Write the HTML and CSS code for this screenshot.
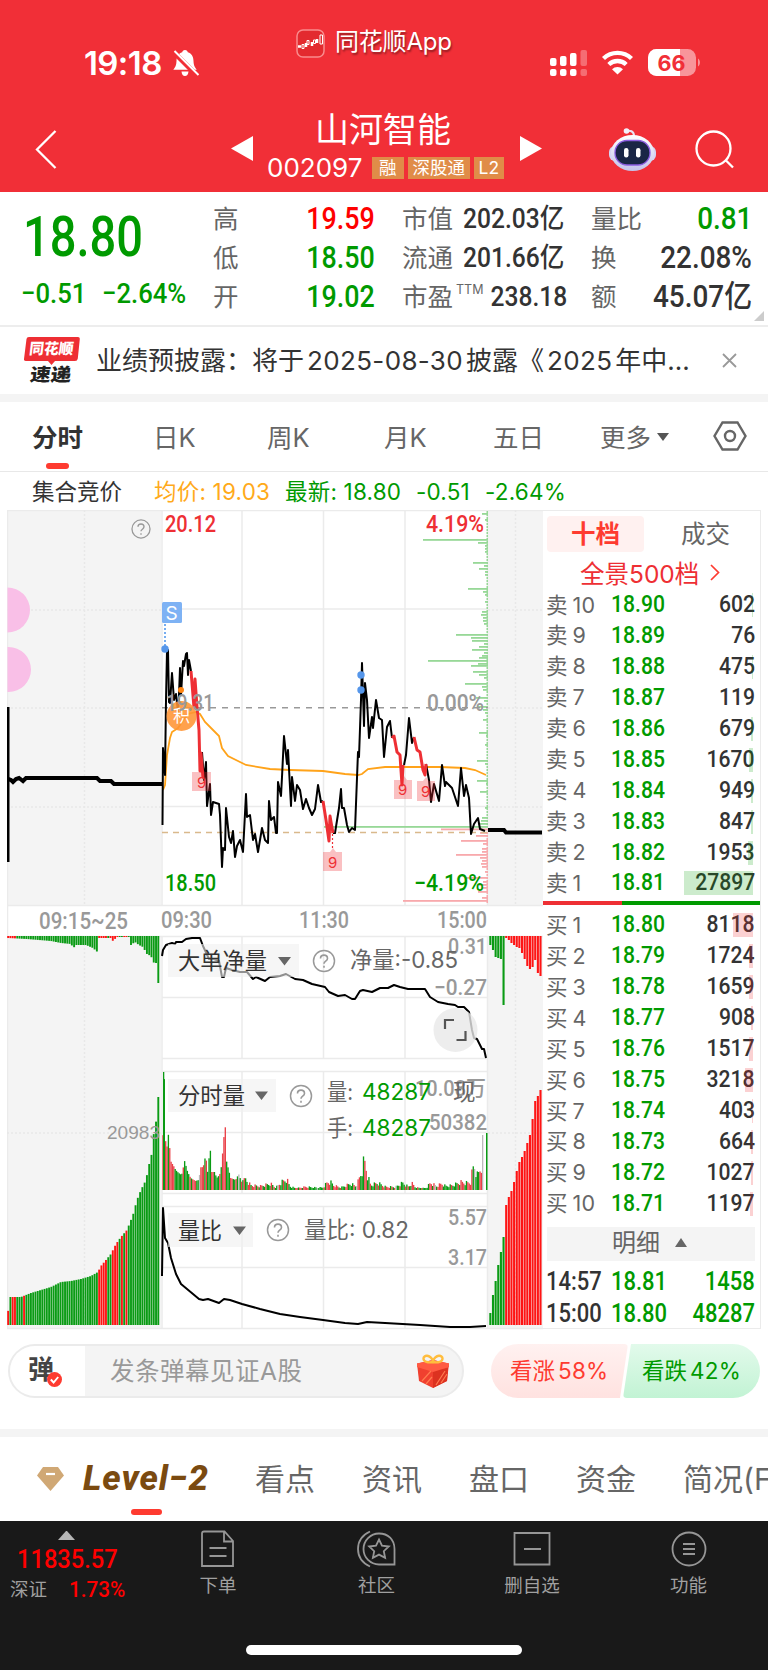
FILE: index.html
```html
<!DOCTYPE html>
<html lang="zh-CN">
<head>
    <meta charset="UTF-8">
    <meta name="viewport" content="width=device-width, initial-scale=1.0">
    <title>山河智能 002097</title>
    <link rel="stylesheet" href="styles.css">
</head>
<body>
    <header class="header">
        <div class="status-bar">
            <div class="status-time">
                <span class="clock">19:18</span>
                <svg width="28" height="28" viewBox="0 0 28 28">
                    <path d="M13 1c1.700 0 2.600 1 2.800 2.300 4 1.200 5.600 4.500 5.700 8.700.1 4.500 1.500 6.500 3.300 8.700H1.300c1.800-2.200 3.100-4.200 3.200-8.700.1-4.200 1.800-7.500 5.700-8.700C10.400 2 11.300 1 13 1zM9.500 22.500h7c-.3 3-1.600 4.500-3.500 4.500s-3.200-1.500-3.500-4.500z" fill="#fff"/>
                    <path d="M1 2.500 25.500 27" stroke="#f12f37" stroke-width="5"/>
                    <path d="M2.500 2 26.500 26" stroke="#fff" stroke-width="2"/>
                </svg>
            </div>
            <div class="app-name">
                <svg width="29" height="29" viewBox="0 0 29 29">
                    <rect x="1" y="1" width="27" height="27" rx="6" fill="#e32a2f" stroke="#f98c8d" stroke-width="1.500"/>
                    <path d="M2 17.500h3M10 14v4M16 13v4M21 10v4" stroke="#fff" stroke-width="2.500"/>
                    <path d="M6 15.500h2v4H6zM11 11.500h2v4h-2zM17.500 11h2v3.500h-2zM24 6h2.500v9H24z" fill="none" stroke="#fff" stroke-width="1"/>
                </svg>
                <span>同花顺App</span>
            </div>
            <div class="status-icons">
                <svg width="37" height="26" viewBox="0 0 37 26" fill="#fff">
                    <rect x="0" y="8" width="6.500" height="8" rx="2"/>
                    <rect x="10" y="6" width="6.500" height="10" rx="2"/>
                    <rect x="20" y="3" width="6.500" height="13" rx="2"/>
                    <rect x="30.500" y="0" width="6.500" height="16" rx="2" opacity=".3"/>
                    <rect x="0" y="19" width="6.500" height="7" rx="2"/>
                    <rect x="10" y="19" width="6.500" height="7" rx="2"/>
                    <rect x="20" y="19" width="6.500" height="7" rx="2"/>
                    <rect x="30.500" y="19" width="6.500" height="7" rx="2" opacity=".3"/>
                </svg>
                <svg class="wifi" width="33" height="25" viewBox="0 0 33 25">
                    <path d="M2.500 8.500a20 20 0 0 1 28 0M7.800 14.500a12.500 12.500 0 0 1 17.400 0" fill="none" stroke="#fff" stroke-width="4.300"/>
                    <path d="M16.500 24.500 11 19.200a8 8 0 0 1 11 0z" fill="#fff"/>
                </svg>
                <svg width="53" height="27" viewBox="0 0 53 27">
                    <rect width="48" height="27" rx="8.500" fill="#f8959a"/>
                    <path d="M8.500 0H32v27H8.500A8.500 8.500 0 0 1 0 18.500v-10A8.500 8.500 0 0 1 8.500 0z" fill="#fff"/>
                    <path d="M50 9.500c2.600 1.500 2.600 6.500 0 8z" fill="#f8959a"/>
                    <text x="9.500" y="21.500" class="battery-text" textLength="28" lengthAdjust="spacingAndGlyphs">66</text>
                </svg>
            </div>
        </div>
        <nav class="title-bar">
            <svg class="back" width="22" height="39" viewBox="0 0 22 39"><path d="M20.500 1 2 19.500l18.500 18.500" fill="none" stroke="#fff" stroke-width="2.300"/></svg>
            <svg class="prev" width="22" height="25" viewBox="0 0 22 25"><path d="M22 0v25L0 12.500z" fill="#fff"/></svg>
            <div class="stock">
                <h1>山河智能</h1>
                <div class="stock-code">
                    <span class="code">002097</span>
                    <span class="badge">融</span>
                    <span class="badge">深股通</span>
                    <span class="badge">L2</span>
                </div>
            </div>
            <svg class="next" width="22" height="25" viewBox="0 0 22 25"><path d="M0 0v25l22-12.500z" fill="#fff"/></svg>
            <svg class="robot" width="47" height="43" viewBox="0 0 47 43">
                <defs>
                    <linearGradient id="robotHead" x1="0" y1="0" x2="0" y2="1">
                        <stop offset="0" stop-color="#fff"/>
                        <stop offset="1" stop-color="#c3c2ea"/>
                    </linearGradient>
                </defs>
                <path d="M17 3c4-1 8 0 8 5" fill="none" stroke="#e9e4f3" stroke-width="2"/>
                <circle cx="17.500" cy="3" r="2.800" fill="#f3eff9"/>
                <rect x="0" y="18" width="47" height="15" rx="6" fill="#d6d5f3"/>
                <ellipse cx="23.500" cy="25" rx="21.500" ry="18" fill="url(#robotHead)"/>
                <rect x="6" y="12.500" width="35" height="24.500" rx="12" fill="#1a2646" stroke="#8b5de0" stroke-width="1.300"/>
                <rect x="15" y="20" width="4.500" height="9.500" rx="2.200" fill="#fff"/>
                <rect x="27" y="20" width="4.500" height="9.500" rx="2.200" fill="#fff"/>
            </svg>
            <svg class="search" width="39" height="39" viewBox="0 0 39 39" fill="none" stroke="#fff" stroke-width="2.300">
                <circle cx="18.500" cy="18.500" r="17"/>
                <path d="m30.500 30 7.500 7.500"/>
            </svg>
        </nav>
    </header>

    <section class="quote">
        <div class="quote-price">
            <div class="price-now"><span class="num">18.80</span></div>
            <div class="price-diff">
                <span class="num">−0.51</span>
                <span class="num">−2.64%</span>
            </div>
        </div>
        <dl class="quote-col">
            <div><dt>高</dt><dd class="num up">19.59</dd></div>
            <div><dt>低</dt><dd class="num down">18.50</dd></div>
            <div><dt>开</dt><dd class="num down">19.02</dd></div>
        </dl>
        <dl class="quote-col small">
            <div><dt>市值</dt><dd class="num">202.03亿</dd></div>
            <div><dt>流通</dt><dd class="num">201.66亿</dd></div>
            <div><dt>市盈<sup>TTM</sup></dt><dd class="num">238.18</dd></div>
        </dl>
        <dl class="quote-col wide">
            <div><dt>量比</dt><dd class="num down">0.81</dd></div>
            <div><dt>换</dt><dd class="num">22.08%</dd></div>
            <div><dt>额</dt><dd class="num">45.07亿</dd></div>
        </dl>
        <i class="corner"></i>
    </section>

    <section class="news">
        <svg width="56" height="47" viewBox="0 0 56 47">
            <path d="M5 0h49q2 0 1.800 2l-2 19.500q-.3 2.500-2.800 2.500H31l-3.500 4-3.500-4H2Q-.3 24 0 22L2.500 2Q2.700 0 5 0z" fill="#ee2f34"/>
            <text x="7" y="17.500" class="logo-top" textLength="44" transform="skewX(-7)">同花顺</text>
            <text x="11" y="44" class="logo-bottom" textLength="41" transform="skewX(-7)">速递</text>
        </svg>
        <p>业绩预披露：将于<span>2025-08-30</span>披露《<span>2025</span>年中...</p>
        <svg width="15" height="15" viewBox="0 0 15 15"><path d="m1 1 13 13M14 1 1 14" stroke="#999" stroke-width="1.800"/></svg>
    </section>

    <nav class="period-tabs">
        <a class="active">分时</a>
        <a>日K</a>
        <a>周K</a>
        <a>月K</a>
        <a>五日</a>
        <a class="more">更多</a>
        <svg width="34" height="30" viewBox="0 0 34 30" fill="none" stroke="#666" stroke-width="2.400">
            <path d="M9.500 1.500h15L32.500 15l-8 13.500h-15L1.500 15z"/>
            <circle cx="17" cy="15" r="5"/>
        </svg>
    </nav>

    <div class="info-line">
        <span class="auction">集合竞价</span>
        <span class="avg">均价: 19.03</span>
        <span class="last">最新: 18.80</span>
        <span class="last">-0.51</span>
        <span class="last">-2.64%</span>
    </div>

    <main class="board">
        <svg class="chart" id="chart" width="536" height="820" viewBox="7 510 536 820">
            <!-- 背景与网格 -->
            <path class="side" d="M7 510h154v395H7zM7 936h154v392H7zM488 510h55v395h-55zM488 936h55v392h-55z"/>
            <path class="grid" d="M7 510.500h536M7 905.500h536M7.500 510v818M162 510v395M162 936v392M242 510v395M323.500 510v395M405 510v395M162 609h326M162 806.500h326M487.500 510v395
                M7 936.500h536M162 997.500h326M162 1058.500h326M162 1071.500h326M162 1132.500h326M162 1193.500h326M162 1206.500h326M162 1267.500h326M7 1328.500h536
                M242 936v122M323.500 936v122M405 936v122M242 1071v122M323.500 1071v122M405 1071v122M242 1206v122M323.500 1206v122M405 1206v122M487.500 936v392"/>
            <path class="dots" d="M84.500 510v395M84.500 936v392M7 610h154M7 708h154M7 807h154M7 1133h154M515.500 510v395M515.500 936v392M488 610h55M488 708h55M488 807h55M488 1133h55"/>
            <path d="M7 587.500a22.500 22.500 0 0 1 0 45zM8 647a22.500 22.500 0 0 1 0 45h-1v-45z" transform="translate(.5)" fill="#f9bfe7"/>

            <g id="depth"></g>
            <path d="M162 707.700h326" stroke="#999" stroke-width="1.500" stroke-dasharray="6 6"/>
            <path d="M162 832.500h326" stroke="#d9b98c" stroke-width="1.500" stroke-dasharray="6 5"/>

            <!-- 集合竞价 -->
            <path d="M8 707v155" stroke="#000" stroke-width="3"/>
            <path d="M8 779l3 1 2 2 3-3 3-1 4 3 3-3h71l3 3h11l3 3h48" class="auction-line"/>
            <path d="M488 830h16l2 2.500h36" class="auction-line"/>

            <!-- 均线与分时线 -->
            <polyline class="avg-line" points="163,790 165,785 167,755 170,738 172,732 178,728 182,722 188,714 196,712 200,714 205,722 213,730 219,736 222,748 228,756 240,762 246,765 270,769 290,770 323,771 345,774 358,775 362,774 368,769 385,767 405,767 440,767 465,768 475,770 486,775"/>
            <polyline class="line" points="162.500,825 163,748 165,775 166,700 167,651 168,650 169,702 170,703 172,673 174,700 176,694 178,712 179,695 180,668 181,695 183,661 184,666 186,654 187,653 188,675 189,660 191,671"/>
            <polyline class="line" points="202,752 204,780 206,762 207,806 210,784 211,815 213,802 219,804 220,815 222,867 223,848 225,850 226,808 229,837 231,843 233,831 235,857 237,846 240,840 243,852 246,794 247,817 250,815 253,840 255,834 258,852 262,828 265,840 268,843 269,801 271,820 274,817 276,833 277,833 278,782 281,796 282,777 284,736 287,764 288,750 291,806 292,777 295,801 297,785 300,790 303,809 306,799 309,808 312,815 315,809 318,785 321,802 323,801"/>
            <polyline class="line" points="333,833 335,833 339,808 341,789 342,808 344,808 347,825 349,832 352,828 355,830 358,752 359,757 361,700 362,663 364,726 365,683 367,700 369,738 372,717 373,728 376,700 379,718 382,720 384,757 387,727 390,721 392,738"/>
            <polyline class="line" points="404,765 406,755 409,718 412,743 414,737"/>
            <polyline class="line" points="426,764 429,780 431,802 434,784 439,801 442,765 445,786 446,782 452,788 456,800 458,806 461,768 464,796 466,785 469,798 471,834 474,824 478,818 480,829 485,831"/>
            <g class="line nine-line">
                <polyline points="191,671 194,708 195,679 197,707 199,730 200,771 201,753 203,778"/>
                <polyline points="323,801 326,820 329,841 330,816 331,822 333,833"/>
                <polyline points="392,738 394,736 397,752 400,755 402,785 403,765"/>
                <polyline points="414,737 417,750 420,752 423,770 425,775 426,764"/>
            </g>
            <path d="M332.500 834v16" stroke="#ee2f34" stroke-width="1.200" stroke-dasharray="2 2"/>
            <g class="nine">
                <path d="M192 772h7l3-4 3 4h6v19h-19zM323 852h7l3-4 3 4h6v19h-19zM394 780h7l3-4 3 4h5v19h-18zM417 781h6l3-4 3 4h6v20h-18z"/>
                <text x="197" y="788">9</text>
                <text x="328" y="868">9</text>
                <text x="398" y="795">9</text>
                <text x="421" y="797">9</text>
            </g>
            <path d="M165 624v24" stroke="#5f9fee" stroke-width="1.700" stroke-dasharray="2 2"/>
            <g fill="#5596ea">
                <circle cx="165" cy="649" r="3.700"/>
                <circle cx="361" cy="675" r="3.700"/>
                <circle cx="361" cy="690" r="3.700"/>
            </g>
            <rect x="162" y="602" width="20" height="21" rx="1.500" fill="#7eb2f4"/>
            <text x="165.500" y="620" font-size="19" fill="#fff">S</text>
            <circle cx="181" cy="690" r="3" fill="#ff8410"/>
            <circle cx="181.500" cy="716" r="15" fill="#ff9433" opacity=".88"/>
            <text x="173" y="722" font-size="17" fill="#fff">积</text>

            <!-- 坐标文字 -->
            <g class="din" font-size="23">
                <text x="165" y="532" textLength="51" fill="#ee2f34">20.12</text>
                <text x="426" y="532" textLength="58" fill="#ee2f34">4.19%</text>
                <text x="165" y="891" textLength="51" fill="#009a00">18.50</text>
                <text x="414" y="891" textLength="70" fill="#009a00">−4.19%</text>
            </g>
            <g class="din axis" font-size="23">
                <text x="166" y="711" textLength="48">19.31</text>
                <text x="427" y="711" textLength="57">0.00%</text>
                <text x="39" y="929" textLength="89">09:15~25</text>
                <text x="161" y="928" textLength="51">09:30</text>
                <text x="299" y="928" textLength="50">11:30</text>
                <text x="437" y="928" textLength="50">15:00</text>
            </g>
            <g transform="translate(141 529)"><use href="#help" transform="scale(.86)"/></g>

            <!-- 大单净量 -->
            <polyline class="line" points="162,956 163,950 166,945 172,943 175,944 176,942 182,942 186,939 192,938 200,938 203,946 209,959 214,959 219,961 222,977 224,977 226,968 232,970 240,972 247,972 253,979 256,977 265,981 270,977 280,976 286,974 295,979 303,980 312,984 325,987 329,992 338,996 345,995 352,999 355,999 360,991 363,990 372,992 380,988 388,988 394,985 400,987 408,989 425,989 430,997 438,1002 448,1004 455,1005 458,1007 464,1007 469,1012 472,1030 474,1038 477,1039 482,1049 484,1049 486,1058"/>
            <!-- 量比曲线 -->
            <polyline class="line" points="162,1276 163,1208 165,1238 168,1243 171,1258 176,1274 181,1284 187,1289 199,1299 203,1300 208,1299 219,1303 224,1299 230,1300 242,1304 260,1309 280,1314 300,1317 323,1320 345,1323 358,1324 367,1322 385,1323 420,1325 450,1327 470,1327 486,1326"/>
            <g id="bars"></g>

            <circle cx="455.500" cy="1030" r="22" fill="#e8e8e8" opacity=".8"/>
            <path d="M445 1029v-9h9M465.500 1031v9h-9" fill="none" stroke="#555" stroke-width="2.200"/>
            <path d="M168 944h131v33H168zM168 1079h108v33H168zM168 1213h85v34h-85z" fill="#f0f0f0" opacity=".6"/>
            <path d="M278 957h13l-6.500 8.500zM255 1091.500h13l-6.500 8.500zM233 1226.500h13l-6.500 8.500z" fill="#666"/>
            <g font-size="22.500" fill="#333">
                <text x="178" y="969" textLength="89">大单净量</text>
                <text x="178" y="1104" textLength="67">分时量</text>
                <text x="178" y="1239" textLength="44">量比</text>
            </g>
            <defs>
                <g id="help">
                    <circle r="10.500" fill="none" stroke="#999" stroke-width="1.500"/>
                    <path d="M-3.500-2.500c0-4.500 7-4.500 7 0 0 2.700-3.500 2.700-3.500 5.200M0 4.800v2" fill="none" stroke="#999" stroke-width="1.600"/>
                </g>
            </defs>
            <use href="#help" x="324" y="961"/>
            <use href="#help" x="301" y="1096"/>
            <use href="#help" x="278" y="1230"/>
            <g class="din axis" font-size="22">
                <text x="448" y="954" textLength="39">0.31</text>
                <text x="434" y="995" textLength="53">−0.27</text>
                <text x="415" y="1096" textLength="71">10.08万</text>
                <text x="429" y="1130" textLength="58">50382</text>
                <text x="448" y="1225" textLength="39">5.57</text>
                <text x="448" y="1265" textLength="39">3.17</text>
            </g>
            <g class="readout" font-size="22.500">
                <text x="350" y="968" textLength="108">净量:-0.85</text>
                <text x="327" y="1100" textLength="26">量:</text>
                <text x="327" y="1136" textLength="26">手:</text>
                <text x="362" y="1100" textLength="69" fill="#009a00">48287</text>
                <text x="362" y="1136" textLength="69" fill="#009a00">48287</text>
                <text x="453" y="1100">现</text>
                <text x="304" y="1238" textLength="105">量比: 0.82</text>
            </g>
            <text x="107" y="1139" class="auction-vol" textLength="53">20983</text>
        </svg>

        <aside class="orders">
            <div class="order-tabs">
                <span class="active">十档</span>
                <span>成交</span>
            </div>
            <div class="panorama">全景500档
                <svg width="10" height="17" viewBox="0 0 10 17"><path d="m1 1 7.500 7.500L1 16" fill="none" stroke="#fe3b30" stroke-width="1.700"/></svg>
            </div>
            <div class="levels sell">
                <div class="level"><span>卖10</span><b class="num">18.90</b><em class="num">602</em><i style="width:1px"></i></div>
                <div class="level"><span>卖9</span><b class="num">18.89</b><em class="num">76</em></div>
                <div class="level"><span>卖8</span><b class="num">18.88</b><em class="num">475</em><i style="width:1px"></i></div>
                <div class="level"><span>卖7</span><b class="num">18.87</b><em class="num">119</em></div>
                <div class="level"><span>卖6</span><b class="num">18.86</b><em class="num">679</em><i style="width:2px"></i></div>
                <div class="level"><span>卖5</span><b class="num">18.85</b><em class="num">1670</em><i style="width:4px"></i></div>
                <div class="level"><span>卖4</span><b class="num">18.84</b><em class="num">949</em><i style="width:2px"></i></div>
                <div class="level"><span>卖3</span><b class="num">18.83</b><em class="num">847</em><i style="width:2px"></i></div>
                <div class="level"><span>卖2</span><b class="num">18.82</b><em class="num">1953</em><i style="width:5px"></i></div>
                <div class="level"><span>卖1</span><b class="num">18.81</b><em class="num">27897</em><i style="width:69px"></i></div>
            </div>
            <div class="ratio"></div>
            <div class="levels buy">
                <div class="level"><span>买1</span><b class="num">18.80</b><em class="num">8118</em><i style="width:20px"></i></div>
                <div class="level"><span>买2</span><b class="num">18.79</b><em class="num">1724</em><i style="width:4px"></i></div>
                <div class="level"><span>买3</span><b class="num">18.78</b><em class="num">1659</em><i style="width:4px"></i></div>
                <div class="level"><span>买4</span><b class="num">18.77</b><em class="num">908</em><i style="width:2px"></i></div>
                <div class="level"><span>买5</span><b class="num">18.76</b><em class="num">1517</em><i style="width:4px"></i></div>
                <div class="level"><span>买6</span><b class="num">18.75</b><em class="num">3218</em><i style="width:8px"></i></div>
                <div class="level"><span>买7</span><b class="num">18.74</b><em class="num">403</em><i style="width:1px"></i></div>
                <div class="level"><span>买8</span><b class="num">18.73</b><em class="num">664</em><i style="width:2px"></i></div>
                <div class="level"><span>买9</span><b class="num">18.72</b><em class="num">1027</em><i style="width:2px"></i></div>
                <div class="level"><span>买10</span><b class="num">18.71</b><em class="num">1197</em><i style="width:3px"></i></div>
            </div>
            <div class="detail-title">明细</div>
            <div class="trade"><span class="num">14:57</span><b class="num">18.81</b><em class="num">1458</em></div>
            <div class="trade"><span class="num">15:00</span><b class="num">18.80</b><em class="num">48287</em></div>
        </aside>
    </main>

    <section class="danmu">
        <div class="danmu-input">
            <div class="danmu-switch">
                <span>弹</span>
                <svg width="15" height="15" viewBox="0 0 15 15"><circle cx="7.500" cy="7.500" r="7.500" fill="#fe3b30"/><path d="m3.800 7.500 2.800 3 4.600-5.500" fill="none" stroke="#fff" stroke-width="1.900"/></svg>
            </div>
            <span class="placeholder">发条弹幕见证A股</span>
            <svg width="32" height="34" viewBox="0 0 32 34">
                <path d="M0 9.500 16 6l16 3.500-2 17.500-14 7-14-7z" fill="#f0402f"/>
                <path d="M16 16v18l14-7 1-13z" fill="#dc3220"/>
                <path d="M0 9.500 16 6l16 3.500V13l-16 5L0 13z" fill="#ff5a42"/>
                <path d="m5 27 9-10M9 30l6-7M19 31l9-14M24 29l6-9" stroke="#ff7b4f" stroke-width="1.200"/>
                <path d="M16 8C11 9 6.500 8 6.500 4.500S13 0 16 7c3-7 9.500-6 9.500-2.500S21 9 16 8z" fill="none" stroke="#ffbd3e" stroke-width="2.400"/>
            </svg>
        </div>
        <div class="vote">
            <span class="vote-up">看涨<b>58%</b></span>
            <span class="vote-down">看跌<b>42%</b></span>
        </div>
    </section>

    <nav class="section-tabs">
        <svg width="27" height="24" viewBox="0 0 27 24">
            <path d="M6 0h15l6 8.500L13.500 24 0 8.500z" fill="#d0a875"/>
            <path d="M9 7h9" stroke="#fff" stroke-width="2.200"/>
        </svg>
        <a class="level2">Level−2</a>
        <a>看点</a>
        <a>资讯</a>
        <a>盘口</a>
        <a>资金</a>
        <a>简况(F10)</a>
    </nav>

    <footer class="tabbar">
        <div class="index">
            <i></i>
            <strong class="num">11835.57</strong>
            <div><span>深证</span><span class="num">1.73%</span></div>
        </div>
        <div class="tab">
            <svg width="36" height="38" viewBox="0 0 36 38"><path d="M4 1.500h20.500L33 11v25H2V3.500q0-2 2-2zM24 2v9.500h9M9.500 18h17M9.500 26h17"/></svg>
            <span>下单</span>
        </div>
        <div class="tab">
            <svg width="40" height="38" viewBox="0 0 40 38"><path d="M13 1.500C-3 9-3 29 13 36.500M22 3.500c9 0 15.500 6 15.500 15.500v15.500H22a15.500 15.500 0 0 1 0-31zM22 9.500l3 6.200 6.800.8-5 4.700 1.300 6.700-6.100-3.300-6.100 3.300 1.300-6.700-5-4.700 6.800-.8z"/></svg>
            <span>社区</span>
        </div>
        <div class="tab">
            <svg width="38" height="38" viewBox="0 0 38 38"><path d="M1.500 3h35v31.500h-35zM11 19h17"/></svg>
            <span>删自选</span>
        </div>
        <div class="tab">
            <svg width="36" height="38" viewBox="0 0 36 38"><circle cx="18" cy="19" r="16.500"/><path d="M12 14h12M12 19h12M12 24h12"/></svg>
            <span>功能</span>
        </div>
        <div class="home-bar"></div>
    </footer>
    <script src="script.js"></script>
</body>
</html>
```
FILE: styles.css
```css
* {
    box-sizing: border-box;
    margin: 0;
    padding: 0;
}
body {
    width: 768px;
    height: 1670px;
    overflow: hidden;
    background: #fff;
    color: #333;
    font-family: Inter, "Noto Sans CJK SC", sans-serif;
}
svg {
    display: block;
    flex: none;
}
/* 窄体数字 */
.num {
    display: inline-block;
    font-family: Roboto, "Noto Sans CJK SC", sans-serif;
    font-weight: 500;
    font-style: normal;
    transform: scaleX(.88);
    transform-origin: left center;
    white-space: nowrap;
}
.up {
    color: #fe0000;
}
.down {
    color: #009a00;
}

/* 顶部 */
.header {
    height: 192px;
    background: #f12f37;
    color: #fff;
}
.status-bar {
    display: grid;
    grid-template-columns: 212px 255px 150px;
    height: 108px;
    padding: 0 0 0 84px;
}
.status-time {
    display: flex;
    align-items: center;
    gap: 8px;
    height: 125px;
}
.clock {
    width: 80px;
    font-size: 33px;
    font-weight: 600;
    letter-spacing: -.6px;
    white-space: nowrap;
}
.app-name {
    display: flex;
    align-items: center;
    gap: 10px;
    height: 87px;
    font-size: 24px;
    line-height: 30px;
    letter-spacing: -.2px;
    text-shadow: 1px 2px 2px rgba(0,0,0,.4);
}
.app-name span {
    margin-top: -3px;
}
.status-icons {
    display: flex;
    align-items: center;
    height: 125px;
    margin-left: -1px;
}
.wifi {
    margin: 0 14px;
}
.battery-text {
    font-size: 22px;
    font-weight: 700;
    fill: #f12f37;
}
.title-bar {
    display: grid;
    grid-template-columns: 196px 22px 257px 79px 106px 39px;
    align-items: center;
    padding-left: 35px;
    height: 84px;
}
.title-bar svg {
    margin-top: -1px;
}
.stock {
    display: flex;
    flex-direction: column;
    margin-top: -8px;
    padding-left: 12px;
}
.title-bar .prev, .title-bar .next {
    margin-top: -3px;
}
.next {
    margin-left: 10px;
}
.robot {
    margin-left: 20px;
}
h1 {
    padding-left: 50px;
    font-size: 34px;
    font-weight: 400;
    line-height: 42px;
}
.next, .robot, .search {
    justify-self: start;
}
.stock-code {
    display: flex;
    align-items: center;
    gap: 4px;
    height: 32px;
    margin-top: 1px;
}
.code {
    width: 103px;
    padding-left: 2px;
    font-size: 26px;
    line-height: 30px;
    letter-spacing: 0;
}
.badge {
    height: 22px;
    padding: 0 5px;
    background: #e08c48;
    font-size: 17.500px;
    line-height: 21px;
    white-space: nowrap;
}
.badge:nth-child(2) {
    padding: 0 7px;
}
.badge:nth-child(4) {
    padding: 0 4.500px;
}

/* 报价 */
.quote {
    position: relative;
    display: grid;
    grid-template-columns: 165px 162px 162px 161px;
    column-gap: 27px;
    height: 135px;
    padding: 7px 0 0 21px;
    border-bottom: 2px solid #ededed;
}
.price-now {
    height: 76px;
    color: #009a00;
    font-size: 56px;
    line-height: 74px;
    padding-left: 2px;
}
.price-now .num {
    transform: scaleX(.84);
}
.price-diff {
    display: grid;
    grid-template-columns: 81px 90px;
    color: #009a00;
    font-size: 28.500px;
    line-height: 38px;
}
.price-diff .num {
    transform: scaleX(.9);
}
.quote-col > div {
    display: flex;
    justify-content: space-between;
    height: 39px;
    line-height: 40px;
}
.quote-col dt {
    color: #666;
    font-size: 25.500px;
    white-space: nowrap;
}
.quote-col dt sup {
    display: inline-block;
    margin-left: 3px;
    font-size: 12.500px;
    line-height: 12px;
    vertical-align: 12px;
}
.quote-col dd {
    font-size: 30.500px;
    transform-origin: right center;
}
.quote-col.wide dd {
    font-size: 31px;
    transform: scaleX(.9);
}
.quote-col.small dd {
    font-size: 27px;
    transform: scaleX(.91);
}
.corner {
    position: absolute;
    right: 4px;
    bottom: 4px;
    border-style: solid;
    border-width: 0 0 10px 10px;
    border-color: transparent transparent #ccc transparent;
}

/* 公告 */
.news {
    display: flex;
    align-items: center;
    height: 75px;
    padding-left: 24px;
    border-bottom: 8px solid #f4f4f4;
}
.news p {
    width: 609px;
    margin: -4px 17px 0 16px;
    overflow: hidden;
    font-size: 26px;
    white-space: nowrap;
}
.news p span {
    margin: 0 3px;
    letter-spacing: .35px;
}
.logo-top {
    fill: #fff;
    font-size: 15px;
    font-weight: 900;
}
.logo-bottom {
    fill: #222;
    font-size: 18px;
    font-weight: 900;
}

/* 周期切换 */
.period-tabs {
    display: grid;
    grid-template-columns: 121px 114px 117px 109px 107px 113px 34px;
    align-items: center;
    height: 70px;
    padding: 0 0 2px 32px;
    border-bottom: 1px solid #e8e8e8;
    color: #666;
    font-size: 25.500px;
}
.period-tabs .active {
    position: relative;
    color: #333;
    font-weight: 700;
}
.period-tabs .active::after {
    content: "";
    position: absolute;
    left: 14px;
    bottom: -15px;
    width: 23px;
    height: 6px;
    border-radius: 3px;
    background: #fe3b30;
}
.more::after {
    content: "";
    display: inline-block;
    margin-left: 6px;
    border: 6px solid transparent;
    border-top: 8px solid #555;
    border-bottom: 0;
    vertical-align: 6px;
}
.info-line {
    display: grid;
    grid-template-columns: 122px 131px 131px 69px 90px;
    height: 38px;
    padding-left: 32px;
    font-size: 22.500px;
    line-height: 39px;
    white-space: nowrap;
}
.avg {
    color: #ffaa1a;
    letter-spacing: .2px;
}
.last {
    color: #009a00;
    letter-spacing: .2px;
}

/* 图表 */
.board {
    display: flex;
    height: 820px;
    padding-left: 7px;
}
.side {
    fill: #f4f4f4;
}
.grid {
    fill: none;
    stroke: #ebebeb;
    stroke-width: 1.500;
}
.dots {
    fill: none;
    stroke: #e8e8e8;
    stroke-width: 1.500;
    stroke-dasharray: 2 2;
}
.line {
    fill: none;
    stroke: #000;
    stroke-width: 2;
    stroke-linejoin: round;
}
.nine-line {
    stroke: #ee2f34;
    stroke-width: 3;
}
.auction-line {
    fill: none;
    stroke: #000;
    stroke-width: 4;
}
.avg-line {
    fill: none;
    stroke: #ffa31a;
    stroke-width: 1.800;
}
.nine path {
    fill: #ee2f34;
    opacity: .3;
}
.nine text {
    fill: #ee2f34;
    font-size: 15px;
}
.din {
    font-family: Roboto, "Noto Sans CJK SC", sans-serif;
    font-weight: 500;
}
.axis {
    fill: #999;
}
.readout {
    fill: #666;
}
.auction-vol {
    fill: #999;
    font-family: "Liberation Sans", Arial, sans-serif;
    font-size: 19px;
}

/* 盘口 */
.orders {
    width: 218px;
    height: 819px;
    border: 1.500px solid #ebebeb;
    border-left: 0;
}
.order-tabs {
    display: grid;
    grid-template-columns: 97px 123px;
    padding: 5px 0 0 4px;
    color: #666;
    font-size: 24.500px;
    line-height: 36px;
    text-align: center;
}
.order-tabs .active {
    border-radius: 4px;
    background: #fff1f0;
    color: #fe3b30;
    font-weight: 700;
}
.panorama {
    display: flex;
    align-items: center;
    gap: 11px;
    height: 40px;
    padding-left: 37px;
    color: #ee2f34;
    font-size: 24.500px;
    white-space: nowrap;
}
.sell {
    margin-top: -3px;
}
.level {
    position: relative;
    display: grid;
    grid-template-columns: 65px 59px 85px;
    align-items: center;
    height: 30.950px;
    padding-left: 3px;
    font-size: 24px;
    line-height: 31px;
}
.level span {
    color: #666;
    font-size: 21.500px;
    letter-spacing: .3px;
    line-height: 28px;
}
.level span::first-letter {
    letter-spacing: 5px;
}
.level b, .trade b {
    color: #009a00;
}
.level em, .trade em {
    justify-self: end;
    transform-origin: right center;
}
.level i {
    position: absolute;
    right: 7px;
    top: 4px;
    height: 24px;
    background: rgba(0,154,0,.2);
}
.buy .level i {
    background: rgba(238,47,52,.22);
}
.ratio {
    height: 4px;
    margin: 3px 0 4px;
    background: linear-gradient(90deg, #ee2f34 79px, #009a00 79px);
}
.detail-title {
    height: 34px;
    margin: 8px 5px 4px 4px;
    padding-left: 65px;
    background: #f4f4f4;
    color: #666;
    font-size: 24px;
    line-height: 32px;
}
.detail-title::after {
    content: "";
    display: inline-block;
    margin-left: 15px;
    border: 6.500px solid transparent;
    border-top: 0;
    border-bottom: 9px solid #666;
    vertical-align: 4px;
}
.trade {
    display: grid;
    grid-template-columns: 65px 59px 85px;
    height: 32.500px;
    padding-left: 3px;
    font-size: 25px;
    line-height: 33px;
}
.trade em {
    color: #009a00;
}

/* 弹幕 */
.danmu {
    display: flex;
    justify-content: space-between;
    height: 107px;
    padding: 14px 8px 0;
    border-bottom: 8px solid #f4f4f4;
}
.danmu-input {
    display: flex;
    align-items: center;
    width: 456px;
    height: 54px;
    overflow: hidden;
    border: 2px solid #ebebeb;
    border-radius: 27px;
    background: #f4f4f4;
}
.danmu-switch {
    position: relative;
    width: 75px;
    height: 52px;
    padding-left: 18px;
    background: #fff;
    color: #444;
    font-size: 26px;
    font-weight: 700;
    line-height: 49px;
}
.danmu-switch svg {
    position: absolute;
    left: 37px;
    top: 27px;
}
.placeholder {
    width: 307px;
    margin: -3px 0 0 25px;
    color: #999;
    font-size: 24.500px;
    letter-spacing: .5px;
}
.vote {
    display: flex;
    width: 269px;
    height: 54px;
    font-size: 22.500px;
    line-height: 54px;
}
.vote b {
    margin-left: 3px;
    font-weight: 400;
    letter-spacing: .2px;
}
.vote-up {
    width: 137px;
    padding-left: 19px;
    border-radius: 27px 4px 4px 27px;
    background: linear-gradient(#fff1f0, #ffe2e0);
    color: #fe3b30;
    clip-path: polygon(0 0, 100% 0, 129px 100%, 0 100%);
}
.vote-down {
    width: 137px;
    margin-left: -5px;
    padding-left: 19px;
    border-radius: 4px 27px 27px 4px;
    background: linear-gradient(#e2faeb, #c2f3d4);
    color: #009a00;
    clip-path: polygon(8px 0, 100% 0, 100% 100%, 0 100%);
}

/* 栏目 */
.section-tabs {
    position: relative;
    display: grid;
    grid-template-columns: 46px 172px 107px 107px 107px 107px 85px;
    align-items: center;
    height: 84px;
    padding: 0 0 4px 37px;
    overflow: hidden;
    color: #666;
    font-size: 30px;
    white-space: nowrap;
}
.section-tabs svg {
    margin-top: 3px;
}
.section-tabs .level2 {
    padding-top: 3px;
    color: #7a4a10;
    font-family: Roboto, sans-serif;
    font-size: 35px;
    font-style: italic;
    font-weight: 800;
    letter-spacing: .9px;
}
.section-tabs::after {
    content: "";
    position: absolute;
    left: 131px;
    bottom: 6px;
    width: 31px;
    height: 6px;
    border-radius: 3px;
    background: #fe3b30;
}

/* 底部 */
.tabbar {
    position: relative;
    display: grid;
    grid-template-columns: 139px 158px 159px 152px 161px;
    height: 149px;
    overflow: hidden;
    background: #191919;
    color: #a0a0a0;
}
.index {
    display: flex;
    flex-direction: column;
    padding: 10px 0 0 10px;
}
.index i {
    width: 17px;
    margin-left: 48px;
    border: 8.500px solid transparent;
    border-top: 0;
    border-bottom: 9px solid #b5b5b5;
}
.index .num {
    color: #fe0000;
}
.index strong {
    margin-left: 7px;
    font-size: 26px;
    line-height: 38px;
    transform: scaleX(.91);
}
.index div {
    display: grid;
    grid-template-columns: 59px 60px;
    margin-top: -2px;
    font-size: 22.500px;
    line-height: 26px;
}
.index div .num {
    transform: scaleX(.92);
}
.index div span:first-child {
    font-size: 18.500px;
}
.tab {
    display: flex;
    flex-direction: column;
    align-items: center;
    padding-top: 9px;
    font-size: 18.500px;
    line-height: 34px;
}
.tab svg {
    fill: none;
    stroke: #969696;
    stroke-width: 1.800;
}
.home-bar {
    position: absolute;
    left: 246px;
    bottom: 15px;
    width: 276px;
    height: 10px;
    border-radius: 5px;
    background: #fff;
}
```
FILE: script.js
```js
const NS = 'http://www.w3.org/2000/svg';
const GREEN = '#0a9b14';
const RED = '#fe1414';

function bar(parent, x, y, w, h, color) {
    const r = document.createElementNS(NS, 'rect');
    r.setAttribute('x', x);
    r.setAttribute('y', y);
    r.setAttribute('width', w);
    r.setAttribute('height', h);
    r.setAttribute('fill', color);
    parent.appendChild(r);
}

// 在关键点之间线性插值
function valueAt(points, x) {
    for (let i = 1; i < points.length; i++) {
        if (x <= points[i][0]) {
            const [x0, y0] = points[i - 1];
            const [x1, y1] = points[i];
            return y0 + (y1 - y0) * (x - x0) / (x1 - x0);
        }
    }
    return points[points.length - 1][1];
}
function inRanges(ranges, x) {
    return ranges.some(r => x >= r[0] && x <= r[1]);
}

const bars = document.getElementById('bars');

// 左侧集合竞价
const auctionNet = [[7,2],[26,3],[50,5],[60,7],[70,8],[72.5,12],[75,9],[85,9],[92,12],[96.5,16],[97.5,2],[110,2],[112,5],[116,1],[128,1],[130,9],[134,6],[138,9],[142,11],[146,18],[150,20],[153,27],[156,27],[157,47]];
const auctionNetRed = [[7,15],[21,23],[97,106],[109,118],[123,126]];
const auctionVol = [[7,12],[8.5,28],[20,28],[30,32],[40,35],[50,38],[60,43],[70,44],[80,46],[90,49],[97,53],[100,59],[110,71],[115,81],[120,88],[126,95],[132,110],[136,125],[140,135],[145,145],[148,160],[151,172],[153,193],[156,208],[157,228]];
const auctionVolRed = [[7,8],[10,15],[21,24],[97,106],[111,118],[120,122],[125,127]];
for (let i = 0; i < 67; i++) {
    const x = 7.2 + i * 2.275;
    bar(bars, x, 936, 1.9, valueAt(auctionNet, x), inRanges(auctionNetRed, x) ? RED : GREEN);
    const h = valueAt(auctionVol, x);
    bar(bars, x, 1325 - h, 1.9, h, inRanges(auctionVolRed, x) ? RED : GREEN);
}

// 右侧收盘竞价
const closeNet = [9,14,21,22,23,69,2,4,7,9,11,12,17,23,30,33,31,24,37,40];
const closeTop = [1313,1295,1281,1265,1252,1237,1205,1197,1191,1182,1171,1162,1157,1151,1143,1135,1119,1101,1096,1090];
closeNet.forEach((h, i) => {
    const x = 489.3 + i * 2.64;
    const color = i < 6 ? GREEN : RED;
    bar(bars, x, 936, 2.1, h, color);
    bar(bars, x, closeTop[i], 2.1, 1325 - closeTop[i], color);
});

// 分时量
const volume = [[162,39],[163.5,118],[165,49],[166,34],[167,60],[168.5,50],[170,29],[173,24],[175,20],[178,17],[181,15],[184,29],[187,18],[190,12],[195,9],[198,10],[201,27],[202,20],[205,35],[207,18],[209.5,43],[211,18],[214,18],[216,12],[219,15],[221,25],[223,50],[224.5,66],[226,28],[228,20],[230,12],[235,10],[238,16],[241,8],[245,14],[250,6],[260,5],[270,8],[275,3],[280,9],[286,14],[289,5],[295,2],[305,4],[315,3],[322,3],[327,10],[330,10],[333,6],[340,3],[350,8],[355,5],[358,12],[361,24],[363.5,37],[365,32],[367,18],[370,6],[377,9],[385,4],[395,4],[402,9],[408,4],[411,9],[415,3],[425,2],[430,9],[436,5],[441,8],[445,5],[452,6],[460,10],[466,9],[470,10],[472,27],[474,31],[477,17],[480,30],[481,34]];
for (let i = 0; i < 236; i++) {
    const x = 162.3 + i * 1.355;
    let color = (i * 7 + (i * i) % 11) % 9 < 4 ? '#ea4048' : GREEN;
    if ((i * 13) % 29 === 3) color = '#bbb';
    if (i === 1) color = GREEN;
    const wobble = i > 60 ? 1 - ((i * 5) % 4) * .16 : 1;
    const h = Math.max(2, valueAt(volume, x) * wobble);
    bar(bars, x, 1190 - h, 1.35, h, color);
}
bar(bars, 163, 1072, 1.3, 118, GREEN);
bar(bars, 482, 1135, 1.3, 55, '#bbb');
bar(bars, 486, 1133, 1.5, 57, GREEN);

// 挂单分布
const depth = document.getElementById('depth');
const asks = [[514,6],[520,3],[540,65],[543,10],[546,3],[549,3],[552,3],[563,15],[566,4],[569,9],[572,3],[575,3],[589,20],[592,5],[595,3],[602,3],[612,6],[615,7],[618,5],[621,5],[624,4],[635,32],[638,17],[641,16],[644,4],[647,9],[650,16],[653,4],[656,6],[658,9],[661,60],[664,10],[666,17],[672,15],[675,9],[678,4],[684,23],[687,6],[690,5],[698,12],[701,4],[707,11],[710,5],[713,3],[720,5],[733,9],[736,2],[745,3],[761,11],[764,3],[781,11],[784,2],[792,8],[808,3],[818,6],[821,7],[824,10],[827,164]];
const bids = [[829.5,47],[833,8],[836,12],[841,27],[844,5],[849,6],[852,6],[855,32],[858,8],[861,6],[864,7],[867,6],[872,3],[878,22],[882,5],[885,9],[888,6],[892,10],[898,6],[901,85]];
for (let y = 511; y < 826; y += 3) bar(depth, 486.5, y, 1.5, 2, '#97d897');
for (let y = 832; y < 903; y += 3) bar(depth, 486.5, y, 1.5, 2, '#f8a9ac');
asks.forEach(([y, w]) => bar(depth, 488 - w, y - 1, w, 1.8, '#97d897'));
bids.forEach(([y, w]) => bar(depth, 488 - w, y - 1, w, 1.8, '#f8a9ac'));

// 文字按设定宽度压缩
document.querySelectorAll('text[textLength]').forEach(t => {
    t.setAttribute('lengthAdjust', 'spacingAndGlyphs');
});
```
